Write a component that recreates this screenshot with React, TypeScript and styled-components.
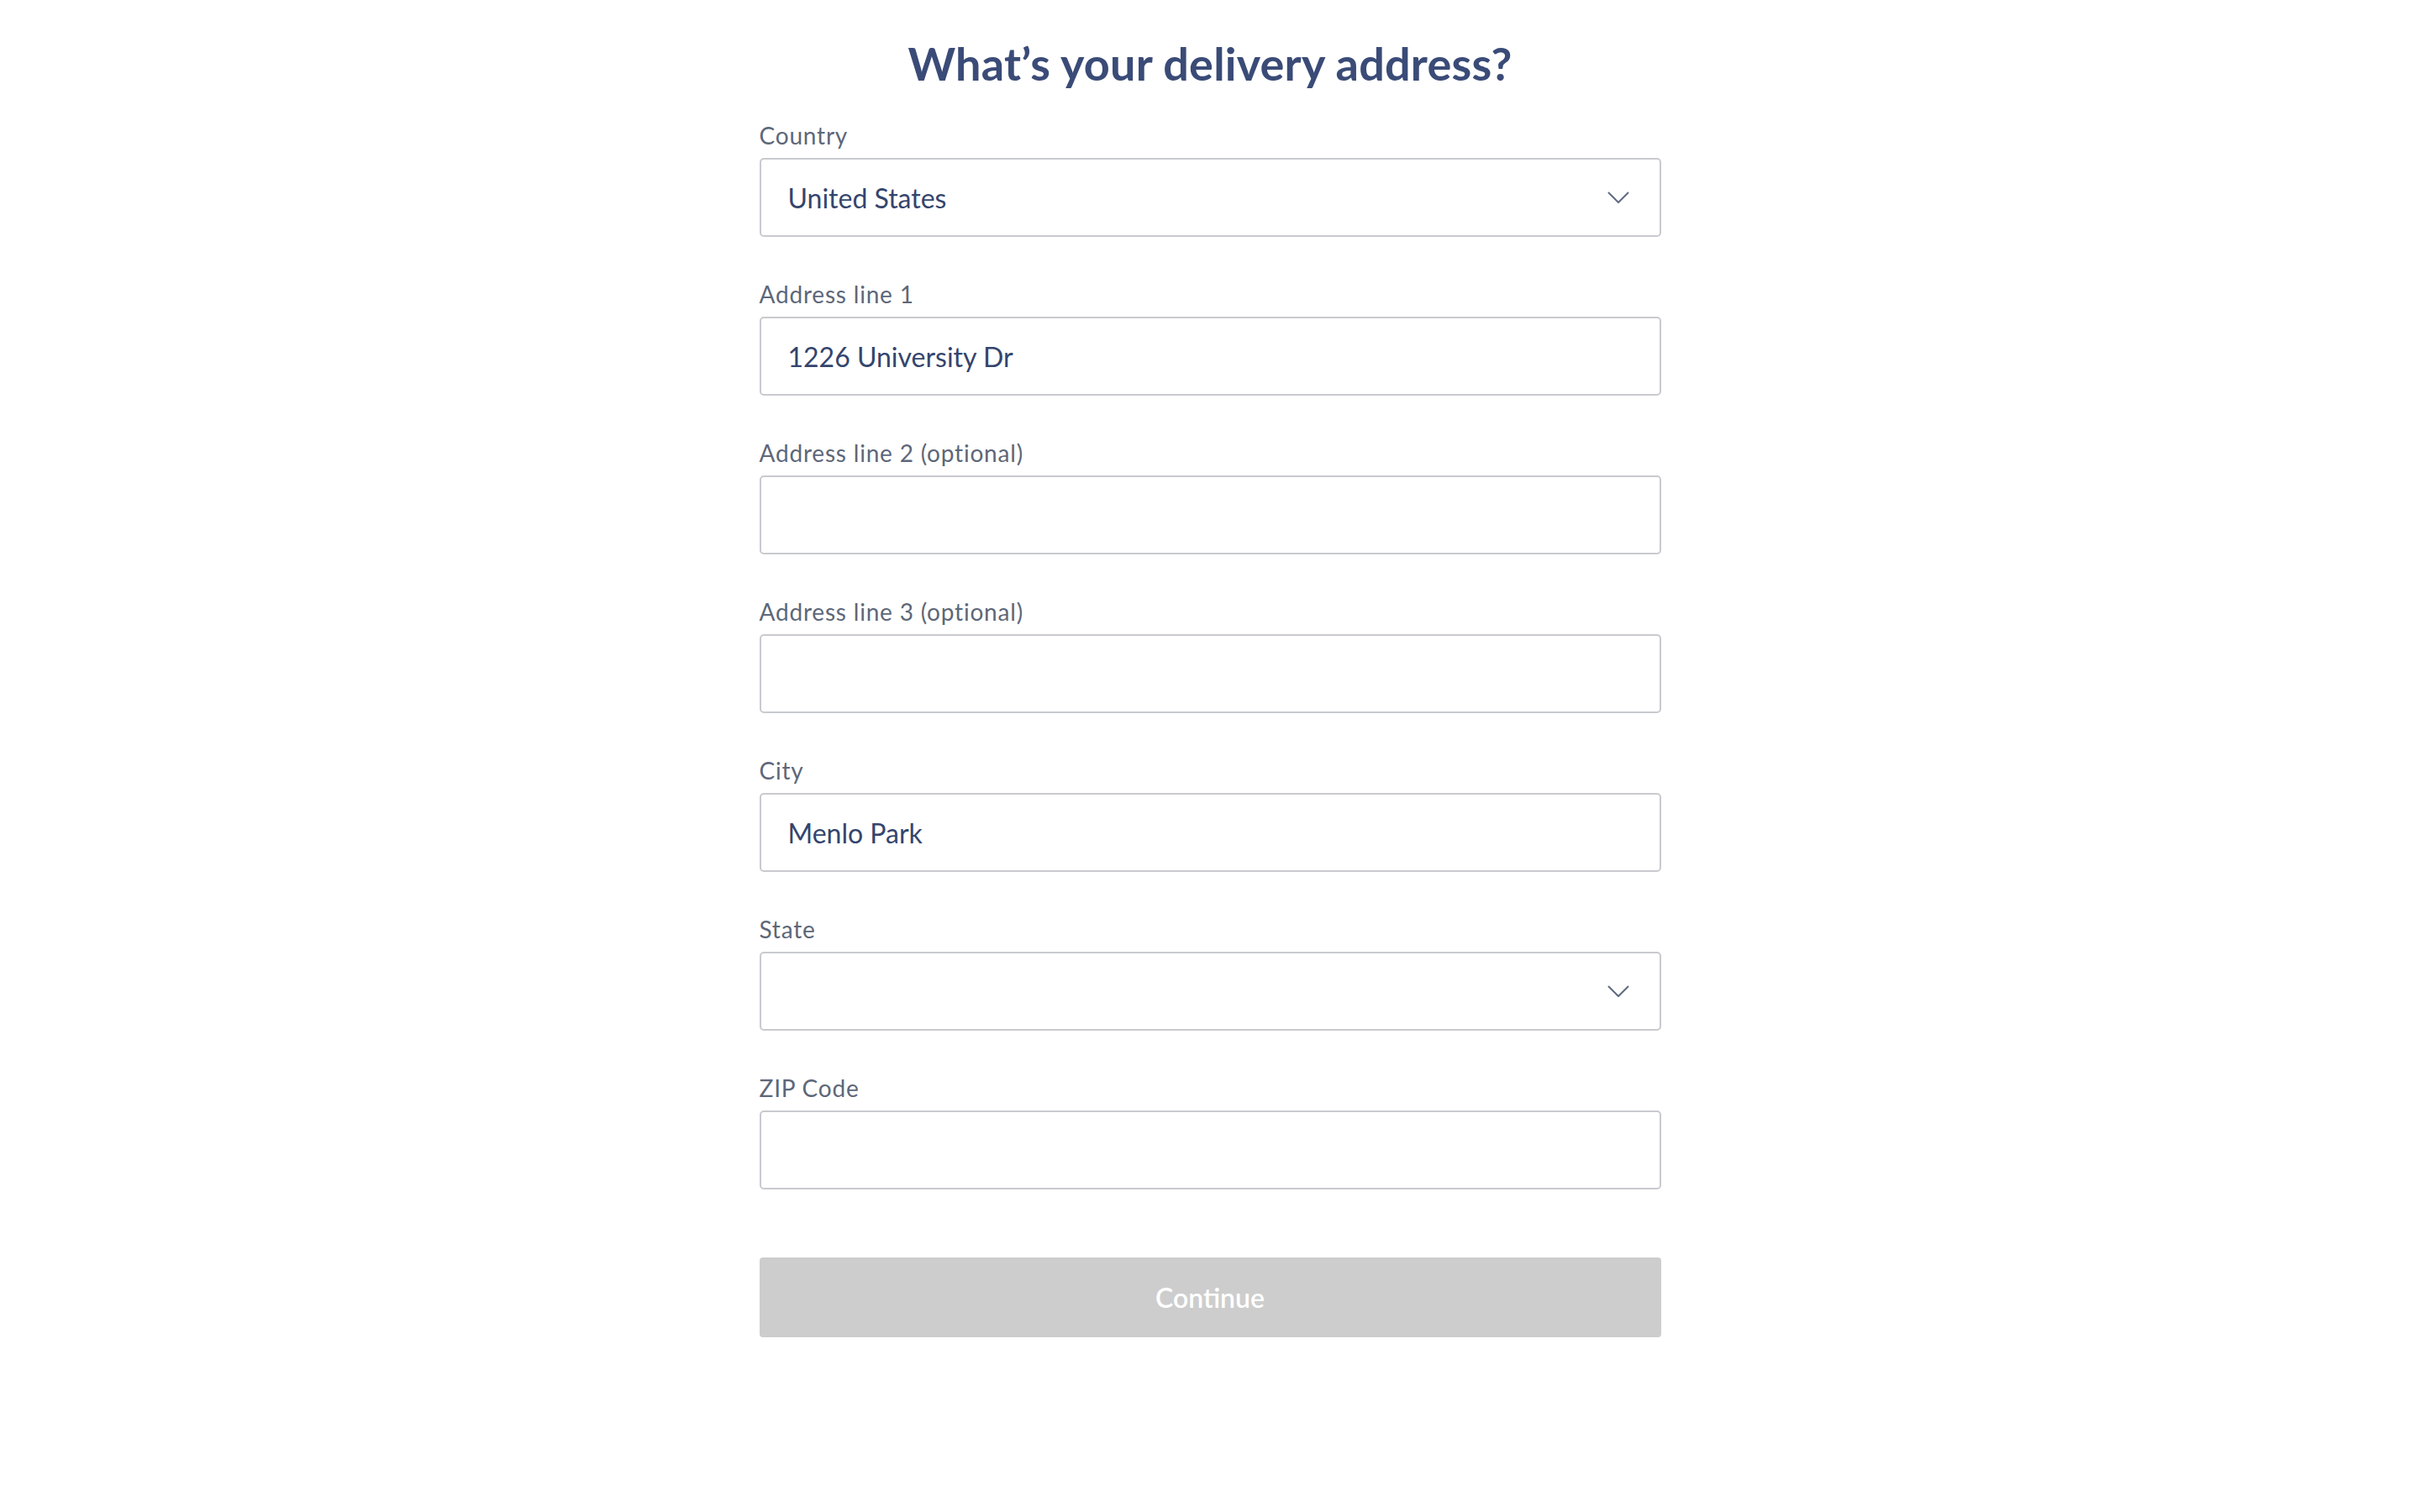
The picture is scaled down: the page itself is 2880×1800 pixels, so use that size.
import styled, { createGlobalStyle } from "styled-components";

const GlobalStyle = createGlobalStyle`
  html, body {
    margin: 0;
    padding: 0;
    background: #ffffff;
    font-family: Lato, "Open Sans", sans-serif;
  }
`;

const Page = styled.main`
  display: flex;
  justify-content: center;
  padding-top: 44px;
`;

const Form = styled.form`
  width: 1073px;
  display: flex;
  flex-direction: column;
`;

const Title = styled.h1`
  margin: 0 0 36px;
  text-align: center;
  font-size: 54px;
  line-height: 64px;
  font-weight: 700;
  letter-spacing: 0.2px;
  color: #3a4b77;
`;

const Fields = styled.div`
  display: flex;
  flex-direction: column;
  gap: 51px;
`;

const Field = styled.div`
  display: flex;
  flex-direction: column;
`;

const Label = styled.label`
  font-size: 28px;
  line-height: 34px;
  letter-spacing: 0.8px;
  color: #5d6779;
  margin-bottom: 10px;
`;

const Input = styled.input`
  box-sizing: border-box;
  width: 100%;
  height: 94px;
  padding: 0 32px;
  border: 2px solid #c9cacf;
  border-radius: 5px;
  background: #fff;
  outline: none;
  font-family: inherit;
  font-size: 32px;
  color: #34456d;
`;

const Select = styled.div`
  box-sizing: border-box;
  height: 94px;
  padding: 0 36px 0 32px;
  border: 2px solid #c9cacf;
  border-radius: 5px;
  display: flex;
  align-items: center;
  justify-content: space-between;
  font-size: 32px;
  color: #34456d;
`;

const Chevron = styled.svg`
  width: 26px;
  height: 15px;
  flex-shrink: 0;
  margin-left: auto;
`;

const ContinueBtn = styled.button`
  margin-top: 81px;
  height: 95px;
  border: none;
  border-radius: 4px;
  background: #cdcdcd;
  color: #ffffff;
  font-family: inherit;
  font-size: 32px;
  font-weight: 600;
`;

function ChevronDown() {
  return (
    <Chevron viewBox="0 0 26 15" fill="none">
      <path
        d="M1.5 1.5 L13 13 L24.5 1.5"
        stroke="#5f6b80"
        strokeWidth="2"
        strokeLinecap="round"
        strokeLinejoin="round"
      />
    </Chevron>
  );
}

type FieldDef = {
  label: string;
  value: string;
  select?: boolean;
};

const fields: FieldDef[] = [
  { label: "Country", value: "United States", select: true },
  { label: "Address line 1", value: "1226 University Dr" },
  { label: "Address line 2 (optional)", value: "" },
  { label: "Address line 3 (optional)", value: "" },
  { label: "City", value: "Menlo Park" },
  { label: "State", value: "", select: true },
  { label: "ZIP Code", value: "" },
];

export default function App() {
  return (
    <>
      <GlobalStyle />
      <Page>
        <Form onSubmit={(e) => e.preventDefault()}>
          <Title>What’s your delivery address?</Title>
          <Fields>
            {fields.map((f) => (
              <Field key={f.label}>
                <Label>{f.label}</Label>
                {f.select ? (
                  <Select>
                    <span>{f.value}</span>
                    <ChevronDown />
                  </Select>
                ) : (
                  <Input defaultValue={f.value} />
                )}
              </Field>
            ))}
          </Fields>
          <ContinueBtn type="button" disabled>
            Continue
          </ContinueBtn>
        </Form>
      </Page>
    </>
  );
}
